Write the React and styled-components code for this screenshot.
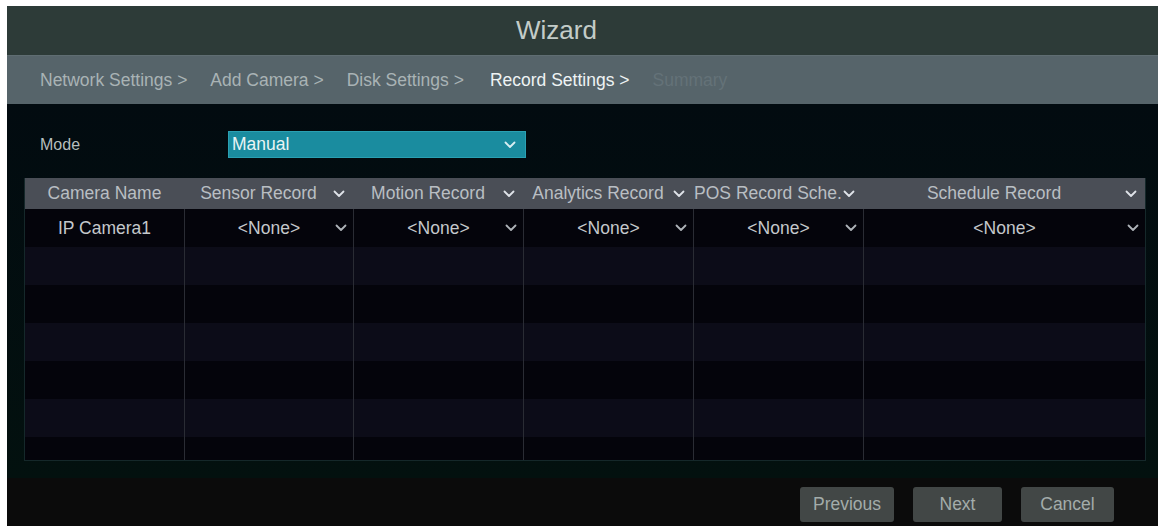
import React from "react";
import styled, { createGlobalStyle } from "styled-components";

const Global = createGlobalStyle`
  html, body { margin: 0; padding: 0; background: #ffffff; }
  body { font-family: "Liberation Sans", Arial, sans-serif; }
  * { box-sizing: border-box; }
`;

const Page = styled.div`
  padding: 6px 4px 0 7px;
  height: 526px;
  overflow: hidden;
`;

const Window = styled.div`
  height: 520px;
  display: flex;
  flex-direction: column;
  background: #020d0f;
  font-size: 17.5px;
`;

const TitleBar = styled.div`
  height: 49px;
  flex: none;
  display: flex;
  align-items: center;
  justify-content: center;
  background: #2d3b38;
  color: #c3ccc8;
  font-size: 26px;
  padding-right: 52px;
`;

const Crumbs = styled.div`
  height: 49px;
  flex: none;
  display: flex;
  align-items: center;
  gap: 23px;
  padding-left: 33px;
  background: #56646a;
  border-top: 1px solid #5f6d72;
`;

const Crumb = styled.span`
  color: ${(p) => (p.$state === "active" ? "#eef3f4" : p.$state === "off" ? "#647278" : "#a9b3b5")};
  white-space: nowrap;
  margin-left: ${(p) => (p.$state === "active" ? "3px" : "0")};
`;

const Content = styled.div`
  flex: 1;
  display: flex;
  flex-direction: column;
  padding: 27px 12px 17px 17px;
  gap: 20px;
  background: linear-gradient(#020b10, #03110f);
`;

const ModeRow = styled.div`
  display: flex;
  align-items: center;
  height: 27px;
`;

const ModeLabel = styled.span`
  width: 204px;
  padding-left: 16px;
  color: #b6bebd;
  font-size: 16px;
`;

const Select = styled.div`
  width: 298px;
  height: 27px;
  display: flex;
  align-items: center;
  justify-content: space-between;
  padding: 0 9px 0 3px;
  background: #1a8c9f;
  border: 1px solid #2aa0b2;
  color: #eaf4f4;
`;

const Table = styled.div`
  display: grid;
  grid-template-columns: 159px 169px 170px 170px 170px 1fr;
  grid-template-rows: 31px repeat(6, 38px) 1fr;
  height: 283px;
  overflow: hidden;
  border: 1px solid #15282a;
  border-top: none;
  background: #05050d;
`;

const HeadCell = styled.div`
  background: #4a4e56;
  color: #b9bec3;
  display: flex;
  align-items: center;
  padding-right: ${(p) => (p.$plain ? "0" : "8px")};
  overflow: hidden;
  white-space: nowrap;
`;

const HeadLabel = styled.div`
  flex: 1;
  min-width: 0;
  display: flex;
  justify-content: center;
  overflow: hidden;
  & > span { flex: none; }
`;

const Cell = styled.div`
  display: grid;
  grid-template-columns: 24px 1fr 24px;
  align-items: center;
  justify-items: center;
  color: #c4c8cc;
  background: ${(p) => (p.$odd ? "#0c0c18" : "#04040b")};
  border-left: ${(p) => (p.$first ? "none" : "1px solid #2a2c34")};
  white-space: nowrap;
`;

const CellText = styled.span`
  grid-column: 2;
`;

const Footer = styled.div`
  height: 48px;
  flex: none;
  background: #0b0b0b;
  display: flex;
  justify-content: flex-end;
  align-items: flex-start;
  gap: 19px;
  padding: 9px 44px 0 0;
`;

const Button = styled.div`
  width: ${(p) => p.$w}px;
  height: 35px;
  border-radius: 3px;
  background: #424746;
  color: #a3acaa;
  display: flex;
  align-items: center;
  justify-content: center;
`;

const Chevron = ({ color = "#aeb3b8" }) => (
  <svg width="12" height="8" viewBox="0 0 12 8" style={{ flex: "none" }}>
    <path d="M1.5 1.5 L6 6 L10.5 1.5" fill="none" stroke={color} strokeWidth="1.8" strokeLinecap="round" strokeLinejoin="round" />
  </svg>
);

const headers = ["Camera Name", "Sensor Record", "Motion Record", "Analytics Record", "POS Record Sche.", "Schedule Record"];

export default function App() {
  const rows = Array.from({ length: 7 }, (_, i) => i);
  return (
    <>
      <Global />
      <Page>
        <Window>
          <TitleBar>Wizard</TitleBar>
          <Crumbs>
            <Crumb>Network Settings &gt;</Crumb>
            <Crumb>Add Camera &gt;</Crumb>
            <Crumb>Disk Settings &gt;</Crumb>
            <Crumb $state="active">Record Settings &gt;</Crumb>
            <Crumb $state="off">Summary</Crumb>
          </Crumbs>
          <Content>
            <ModeRow>
              <ModeLabel>Mode</ModeLabel>
              <Select>
                <span>Manual</span>
                <Chevron color="#d8eef2" />
              </Select>
            </ModeRow>
            <Table>
              {headers.map((h, i) => (
                <HeadCell key={h} $plain={i === 0}>
                  <HeadLabel>
                    <span>{h}</span>
                  </HeadLabel>
                  {i > 0 && <Chevron color="#dfe3e8" />}
                </HeadCell>
              ))}
              {rows.map((r) =>
                headers.map((h, c) => (
                  <Cell key={`${r}-${c}`} $odd={r % 2 === 1} $first={c === 0}>
                    {r === 0 && (
                      <>
                        <CellText>{c === 0 ? "IP Camera1" : "<None>"}</CellText>
                        {c > 0 && <Chevron />}
                      </>
                    )}
                  </Cell>
                ))
              )}
            </Table>
          </Content>
          <Footer>
            <Button $w={94}>Previous</Button>
            <Button $w={89}>Next</Button>
            <Button $w={93}>Cancel</Button>
          </Footer>
        </Window>
      </Page>
    </>
  );
}
